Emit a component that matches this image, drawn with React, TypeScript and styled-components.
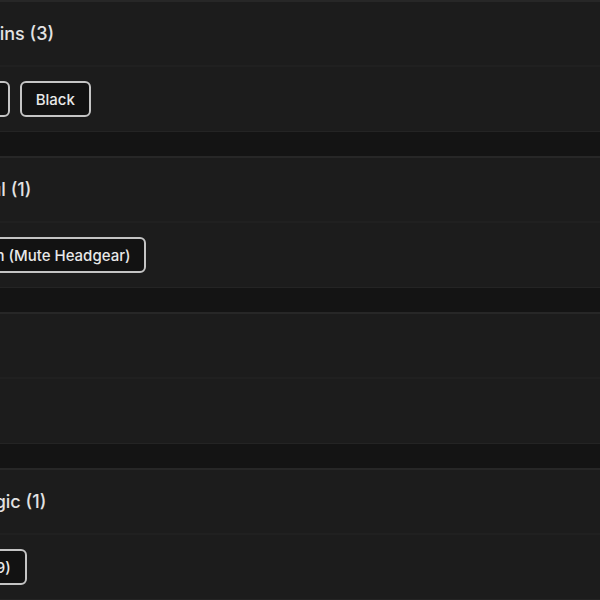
import React from "react";
import styled, { createGlobalStyle } from "styled-components";

const GlobalStyle = createGlobalStyle`
  html, body {
    margin: 0;
    padding: 0;
    background: #141414;
    font-family: Inter, "Noto Sans", sans-serif;
    overflow: hidden;
  }
`;

interface Category {
  id: number;
  title: string;
  items: string[];
}

const categories: Category[] = [
  { id: 1, title: "Basins (3)", items: ["White", "Black"] },
  { id: 2, title: "Soul (1)", items: ["Dragon (Mute Headgear)"] },
  { id: 3, title: "", items: [] },
  { id: 4, title: "Magic (1)", items: ["Staff (9)"] },
];

export default function App() {
  return (
    <>
      <GlobalStyle />
      <Page>
        <List>
          {categories.map((c) => (
            <Card key={c.id}>
              <Header>
                <Title>{c.title}</Title>
              </Header>
              <Body>
                {c.items.map((item) => (
                  <Chip key={item}>{item}</Chip>
                ))}
              </Body>
            </Card>
          ))}
        </List>
      </Page>
    </>
  );
}

const Page = styled.div`
  width: 600px;
  height: 600px;
  overflow: hidden;
  background: #141414;
`;

const List = styled.div`
  display: flex;
  flex-direction: column;
  gap: 24px;
  margin-left: -80px;
  margin-right: -40px;
`;

const Card = styled.section`
  display: flex;
  flex-direction: column;
  background: #1c1c1c;
  border-top: 2px solid #272727;
  border-bottom: 1px solid #242424;
`;

const Header = styled.div`
  display: flex;
  align-items: center;
  height: 63px;
  padding-left: 48px;
  border-bottom: 2px solid #202020;
`;

const Title = styled.h3`
  margin: 0;
  font-size: 18px;
  font-weight: 500;
  color: #e2e2e2;
  letter-spacing: 0;
`;

const Body = styled.div`
  display: flex;
  align-items: center;
  gap: 10px;
  height: 64px;
  padding-left: 16px;
`;

const Chip = styled.button`
  height: 36px;
  padding: 0 14px;
  border: 2px solid #c4c4c4;
  border-radius: 6px;
  background: #121212;
  color: #e8e8e8;
  font-family: Inter, "Noto Sans", sans-serif;
  font-size: 15px;
  font-weight: 500;
  white-space: nowrap;
`;
